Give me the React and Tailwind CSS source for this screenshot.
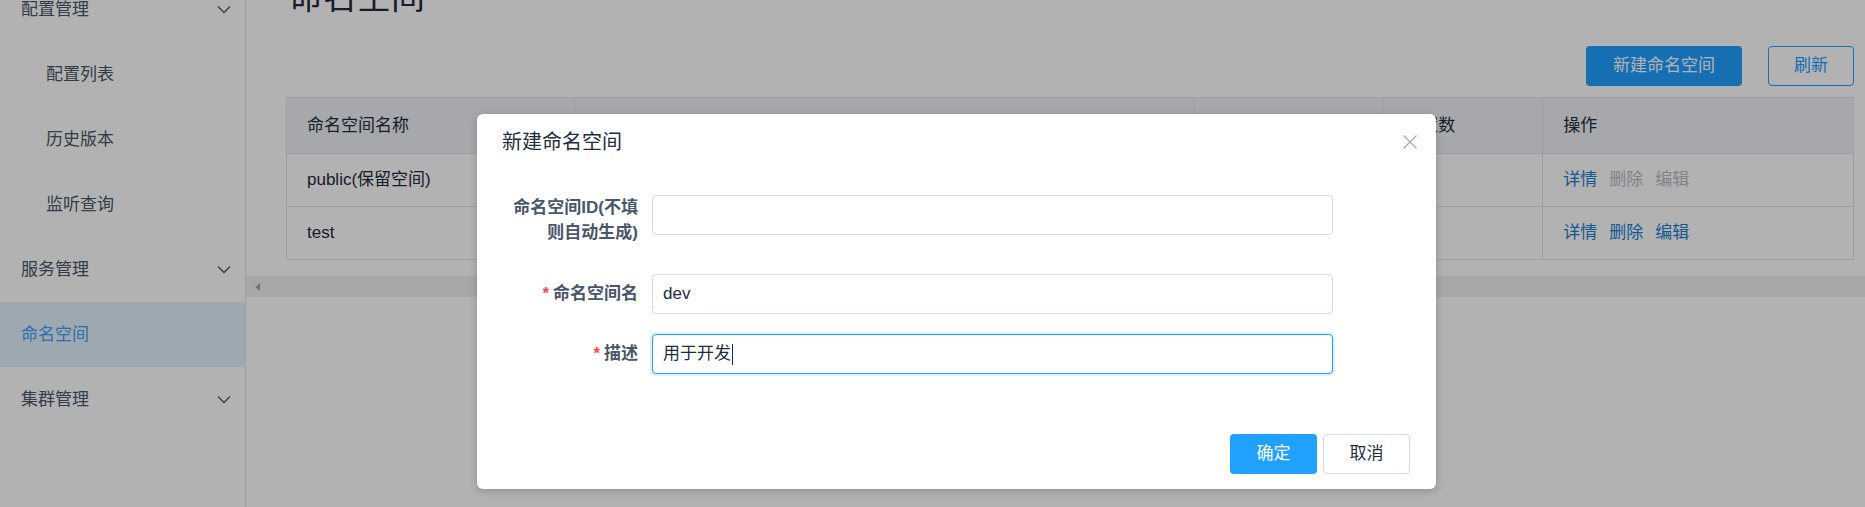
const font = { fontFamily: '"Liberation Sans", "Noto Sans CJK SC", sans-serif' };

const menu = [
  { label: "配置管理", top: true },
  { label: "配置列表" },
  { label: "历史版本" },
  { label: "监听查询" },
  { label: "服务管理", top: true },
  { label: "命名空间", top: true, active: true, leaf: true },
  { label: "集群管理", top: true },
];

const rows = [
  { name: "public(保留空间)", id: "", quota: "200", count: "0", locked: true },
  { name: "test", id: "6a1f0c2e-8d3b-4b8e-9c52-1e7f3a0d4b21", quota: "200", count: "0", locked: false },
];

function Chevron() {
  return (
    <svg width="14" height="9" viewBox="0 0 14 9" fill="none" aria-hidden="true">
      <path d="M1 1.5l6 6 6-6" stroke="#48576a" strokeWidth="1.3" />
    </svg>
  );
}

function Sidebar() {
  return (
    <aside className="w-[246px] shrink-0 border-r border-[#e6e6e6] bg-white">
      <ul className="-mt-[23px]">
        {menu.map((item) => (
          <li
            key={item.label}
            className={`flex h-[65px] items-center justify-between pr-[14px] text-[17px] ${
              item.top ? "pl-[21px]" : "pl-[46px]"
            } ${item.active ? "bg-[#e2f1fd] text-[#409eff]" : "text-[#48576a]"}`}
          >
            <span>{item.label}</span>
            {item.top && !item.leaf ? <Chevron /> : null}
          </li>
        ))}
      </ul>
    </aside>
  );
}

function Table() {
  return (
    <table className="ml-[40px] mr-[11px] table-fixed border-collapse border border-[#dfe6ec] text-[17px] text-[#1f2d3d]">
      <colgroup>
        <col className="w-[288px]" />
        <col className="w-[621px]" />
        <col className="w-[189px]" />
        <col className="w-[159px]" />
        <col className="w-[311px]" />
      </colgroup>
      <thead>
        <tr className="h-[56px] bg-[#eef1f6]">
          {["命名空间名称", "命名空间ID", "配额", "配置数", "操作"].map((h) => (
            <th key={h} className="border-r border-b border-[#dfe6ec] pl-[20px] text-left font-normal">
              {h}
            </th>
          ))}
        </tr>
      </thead>
      <tbody>
        {rows.map((r) => (
          <tr key={r.name} className="h-[53px] bg-white">
            <td className="border-r border-b border-[#dfe6ec] pl-[20px]">{r.name}</td>
            <td className="border-r border-b border-[#dfe6ec] pl-[20px]">{r.id}</td>
            <td className="border-r border-b border-[#dfe6ec] pl-[20px]">{r.quota}</td>
            <td className="border-r border-b border-[#dfe6ec] pl-[20px]">{r.count}</td>
            <td className="border-b border-[#dfe6ec] pl-[20px]">
              <div className="flex gap-[12px]">
                <span className="text-[#1d80d0]">详情</span>
                <span className={r.locked ? "text-[#b9bec6]" : "text-[#1d80d0]"}>删除</span>
                <span className={r.locked ? "text-[#b9bec6]" : "text-[#1d80d0]"}>编辑</span>
              </div>
            </td>
          </tr>
        ))}
      </tbody>
    </table>
  );
}

function Field({ label, required, value, focused, twoLine }) {
  return (
    <div className="flex items-start">
      <label
        className={`w-[150px] shrink-0 pr-[14px] text-right text-[17px] font-bold text-[#48576a] ${
          twoLine ? "leading-[25px]" : "leading-[40px]"
        }`}
      >
        {required ? <span className="mr-[4px] text-[#ff4949]">*</span> : null}
        {label}
      </label>
      <div
        className={`flex h-[40px] w-[681px] items-center rounded-[4px] border bg-white px-[10px] text-[17px] text-[#1f2d3d] ${
          focused ? "border-[#20a0ff] shadow-[0_0_0_2px_rgba(32,160,255,0.15)]" : "border-[#d1dbe5]"
        }`}
      >
        <span>{value}</span>
        {focused ? <span className="ml-px h-[21px] w-px bg-[#1f2d3d]" /> : null}
      </div>
    </div>
  );
}

function Dialog() {
  return (
    <div className="absolute left-[477px] top-[114px] flex h-[375px] w-[959px] flex-col rounded-[6px] bg-white shadow-[0_2px_8px_rgba(0,0,0,0.2)]">
      <div className="flex items-center justify-between pl-[25px] pr-[19px] pt-[17px]">
        <span className="text-[20px] leading-[22px] text-[#1f2d3d]">新建命名空间</span>
        <svg width="14" height="14" viewBox="0 0 14 14" fill="none" aria-hidden="true">
          <path d="M0.5 0.5l13 13M13.5 0.5l-13 13" stroke="#a8a8a8" strokeWidth="1.2" />
        </svg>
      </div>
      <div className="mt-[42px] flex flex-col pl-[25px]">
        <Field label="命名空间ID(不填则自动生成)" twoLine value="" />
        <div className="mt-[29px]">
          <Field label="命名空间名" required value="dev" />
        </div>
        <div className="mt-[20px]">
          <Field label="描述" required value="用于开发" focused />
        </div>
      </div>
      <div className="mt-auto flex justify-end gap-[6px] pb-[15px] pr-[26px]">
        <button className="h-[40px] w-[87px] rounded-[4px] bg-[#20a0ff] text-[17px] text-white">确定</button>
        <button className="h-[40px] w-[87px] rounded-[4px] border border-[#d1dbe5] bg-white text-[17px] text-[#1f2d3d]">
          取消
        </button>
      </div>
    </div>
  );
}

export default function App() {
  return (
    <div className="relative flex h-[507px] w-[1865px] overflow-hidden bg-white" style={font}>
      <Sidebar />
      <main className="flex min-w-0 flex-1 flex-col">
        <h1 className="-mt-[23px] pl-[43px] text-[34px] font-normal leading-[40px] text-[#1f2d3d]">命名空间</h1>
        <div className="mt-[29px] flex justify-end gap-[26px] pr-[11px]">
          <button className="h-[40px] w-[156px] rounded-[4px] bg-[#20a0ff] text-[17px] text-white">新建命名空间</button>
          <button className="h-[40px] w-[86px] rounded-[4px] border border-[#20a0ff] bg-white text-[17px] text-[#20a0ff]">
            刷新
          </button>
        </div>
        <div className="mt-[11px]">
          <Table />
        </div>
        <div className="mt-[16px] flex h-[21px] items-center bg-[#efefef] pl-[8px]">
          <svg width="8" height="10" viewBox="0 0 8 10" aria-hidden="true">
            <path d="M6 1L1.5 5 6 9z" fill="#a3a3a3" />
          </svg>
        </div>
      </main>
      <div className="absolute inset-0 bg-black/30" />
      <Dialog />
    </div>
  );
}
